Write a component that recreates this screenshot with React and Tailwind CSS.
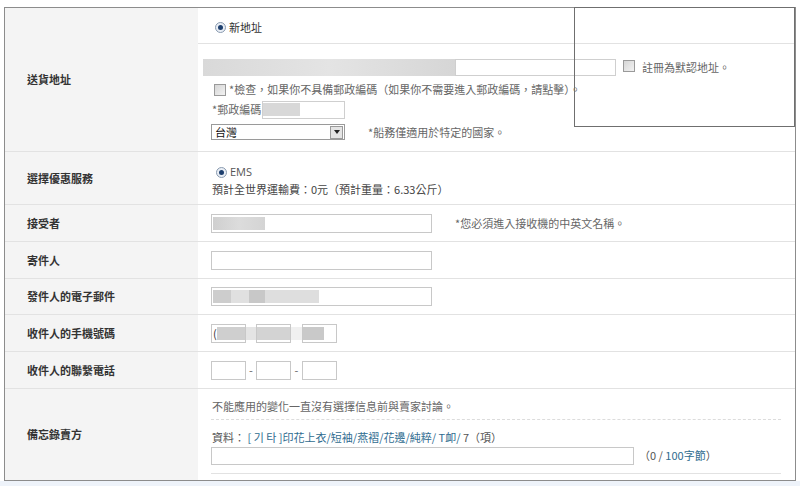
import React from 'react';

const Radio = () => (
    <span className="inline-flex w-[11px] h-[11px] rounded-full border border-[#8a9bb0] bg-[#e9eef5] items-center justify-center shrink-0">
        <span className="w-[5px] h-[5px] rounded-full bg-[#1d3f6e]" />
    </span>
);

const Check = () => (
    <span className="inline-block w-[12px] h-[12px] border border-[#9a9a9a] bg-gradient-to-br from-[#d6d6d6] to-[#f2f2f2] shrink-0" />
);

const Box = ({ w = 'w-[221px]', children }) => (
    <div className={`${w} h-[19px] border border-[#c8c8c8] bg-white flex items-center overflow-hidden`}>{children}</div>
);

const Blur = ({ className }) => <span className={`h-[13px] ${className}`} />;

const Row = ({ label, h, children, first }) => (
    <div className={`flex ${h} ${first ? '' : 'border-t border-[#e2e2e2]'}`}>
        <div className="w-[193px] bg-[#f4f4f4] flex items-center pl-[22px] font-bold text-[#333]">{label}</div>
        <div className="flex-1 bg-white">{children}</div>
    </div>
);

const App = () => {
    return (
        <div className="relative w-[800px] h-[486px] bg-white text-[11px] text-[#555]" style={{ fontFamily: '"Noto Sans CJK TC", "Liberation Sans", sans-serif' }}>
            <div className="h-[7px]" />
            <div className="ml-[4px] w-[792px] border border-[#8c8c8c]">
                {/* 送貨地址 */}
                <Row label="送貨地址" h="h-[143px]" first>
                    <div className="h-[36px] border-b border-[#e2e2e2] flex items-center gap-[3px] pl-[17px] pt-[4px]">
                        <Radio />
                        <span className="text-[#333]">新地址</span>
                    </div>
                    <div className="pt-[15px] pl-[5px]">
                        <div className="flex items-center h-[17px]">
                            <div className="w-[252px] h-[17px] bg-gradient-to-r from-[#d9d9d9] via-[#e4e4e4] to-[#d6d6d6]" />
                            <div className="w-[161px] h-[17px] border border-[#cfcfcf] bg-white" />
                            <span className="ml-[7px]"><Check /></span>
                            <span className="ml-[7px] text-[#666]">註冊為默認地址。</span>
                        </div>
                        <div className="flex items-center h-[13px] mt-[7px] pl-[11px] gap-[3px]">
                            <Check />
                            <span className="text-[#666]">*檢查，如果你不具備郵政編碼（如果你不需要進入郵政編碼，請點擊）。</span>
                        </div>
                        <div className="flex items-center h-[17px] mt-[5px] pl-[9px]">
                            <span className="text-[#666] w-[50px]">*郵政編碼</span>
                            <div className="w-[83px] h-[18px] border border-[#cfcfcf] bg-white flex items-center">
                                <Blur className="w-[37px] bg-[#d8d8d8]" />
                            </div>
                        </div>
                        <div className="flex items-center h-[16px] mt-[6px] pl-[8px]">
                            <div className="w-[134px] h-[16px] border border-[#9a9a9a] bg-white flex items-center justify-between">
                                <span className="pl-[3px] text-[#111]">台灣</span>
                                <span className="w-[13px] h-[13px] mr-[1px] border border-[#9a9a9a] bg-[#e4e4e4] flex items-center justify-center">
                                    <span className="w-0 h-0 border-l-[3px] border-r-[3px] border-t-[4px] border-l-transparent border-r-transparent border-t-[#222]" />
                                </span>
                            </div>
                            <span className="ml-[23px] text-[#666]">*船務僅適用於特定的國家。</span>
                        </div>
                    </div>
                </Row>

                {/* 選擇優惠服務 */}
                <Row label="選擇優惠服務" h="h-[53px]">
                    <div className="pt-[13px] pl-[14px]">
                        <div className="flex items-center gap-[3px] pl-[4px] h-[14px]">
                            <Radio />
                            <span className="text-[#555]" style={{ fontFamily: '"Open Sans", "Noto Sans CJK TC", sans-serif' }}>EMS</span>
                        </div>
                        <div className="mt-[2px] text-[#444]">預計全世界運輸費：0元（預計重量：6.33公斤）</div>
                    </div>
                </Row>

                {/* 接受者 */}
                <Row label="接受者" h="h-[37px]">
                    <div className="h-full flex items-center pl-[13px]">
                        <Box>
                            <Blur className="ml-[1px] w-[52px] bg-gradient-to-r from-[#cfcfcf] via-[#dcdcdc] to-[#d4d4d4]" />
                        </Box>
                        <span className="ml-[23px] text-[#666]">*您必須進入接收機的中英文名稱。</span>
                    </div>
                </Row>

                {/* 寄件人 */}
                <Row label="寄件人" h="h-[37px]">
                    <div className="h-full flex items-center pl-[13px]">
                        <Box />
                    </div>
                </Row>

                {/* 發件人的電子郵件 */}
                <Row label="發件人的電子郵件" h="h-[36px]">
                    <div className="h-full flex items-center pl-[13px]">
                        <Box>
                            <Blur className="ml-[1px] w-[18px] bg-[#cdcdcd]" />
                            <Blur className="w-[18px] bg-[#e0e0e0]" />
                            <Blur className="w-[16px] bg-[#c8c8c8]" />
                            <Blur className="w-[54px] bg-[#dedede]" />
                        </Box>
                    </div>
                </Row>

                {/* 收件人的手機號碼 */}
                <Row label="收件人的手機號碼" h="h-[37px]">
                    <div className="h-full flex items-center pl-[13px]">
                        <div className="flex items-center h-[19px]">
                            <Box w="w-[35px]"><span className="pl-[1px] text-[#333]">(</span><Blur className="w-[30px] bg-[#cfcfcf]" /></Box>
                            <span className="w-[10px] h-[13px] bg-[#e4e4e4]" />
                            <Box w="w-[35px]"><Blur className="w-[33px] bg-[#d3d3d3]" /></Box>
                            <span className="w-[11px] h-[13px] bg-[#f0f0f0]" />
                            <Box w="w-[35px]"><Blur className="w-[21px] bg-[#c9c9c9]" /></Box>
                        </div>
                    </div>
                </Row>

                {/* 收件人的聯繫電話 */}
                <Row label="收件人的聯繫電話" h="h-[37px]">
                    <div className="h-full flex items-center pl-[13px]">
                        <Box w="w-[35px]" />
                        <span className="w-[10px] text-center text-[#666]">-</span>
                        <Box w="w-[35px]" />
                        <span className="w-[11px] text-center text-[#666]">-</span>
                        <Box w="w-[35px]" />
                    </div>
                </Row>

                {/* 備忘錄賣方 */}
                <Row label="備忘錄賣方" h="h-[92px]">
                    <div className="pl-[13px] pr-[14px]">
                        <div className="h-[31px] flex items-end pb-[5px] pl-[1px] border-b border-dashed border-[#dcdcdc] text-[#666]">
                            不能應用的變化一直沒有選擇信息前與賣家討論。
                        </div>
                        <div className="pt-[9px] pl-[1px] text-[#2f6c8f]">
                            <span className="text-[#555]">資料：</span> [ 기 타 ]印花上衣/短袖/燕褶/花邊/純粹/ T卹/ <span className="text-[#555]">7（項）</span>
                        </div>
                        <div className="flex items-center mt-[1px]">
                            <div className="w-[423px] h-[18px] border border-[#c8c8c8] bg-white" />
                            <span className="ml-[5px] text-[#2f6c8f]"><span className="text-[#555]">（0 / </span>100字節<span className="text-[#555]">）</span></span>
                        </div>
                        <div className="mt-[8px] border-b border-[#e2e2e2]" />
                    </div>
                </Row>
            </div>
            <div className="absolute left-0 right-0 top-[481px] h-[5px] bg-[#eef3fa]" />
            <div className="absolute left-[574px] top-[7px] w-[221px] h-[120px] border border-[#6f6f6f] pointer-events-none" />
        </div>
    );
};

export default App;
